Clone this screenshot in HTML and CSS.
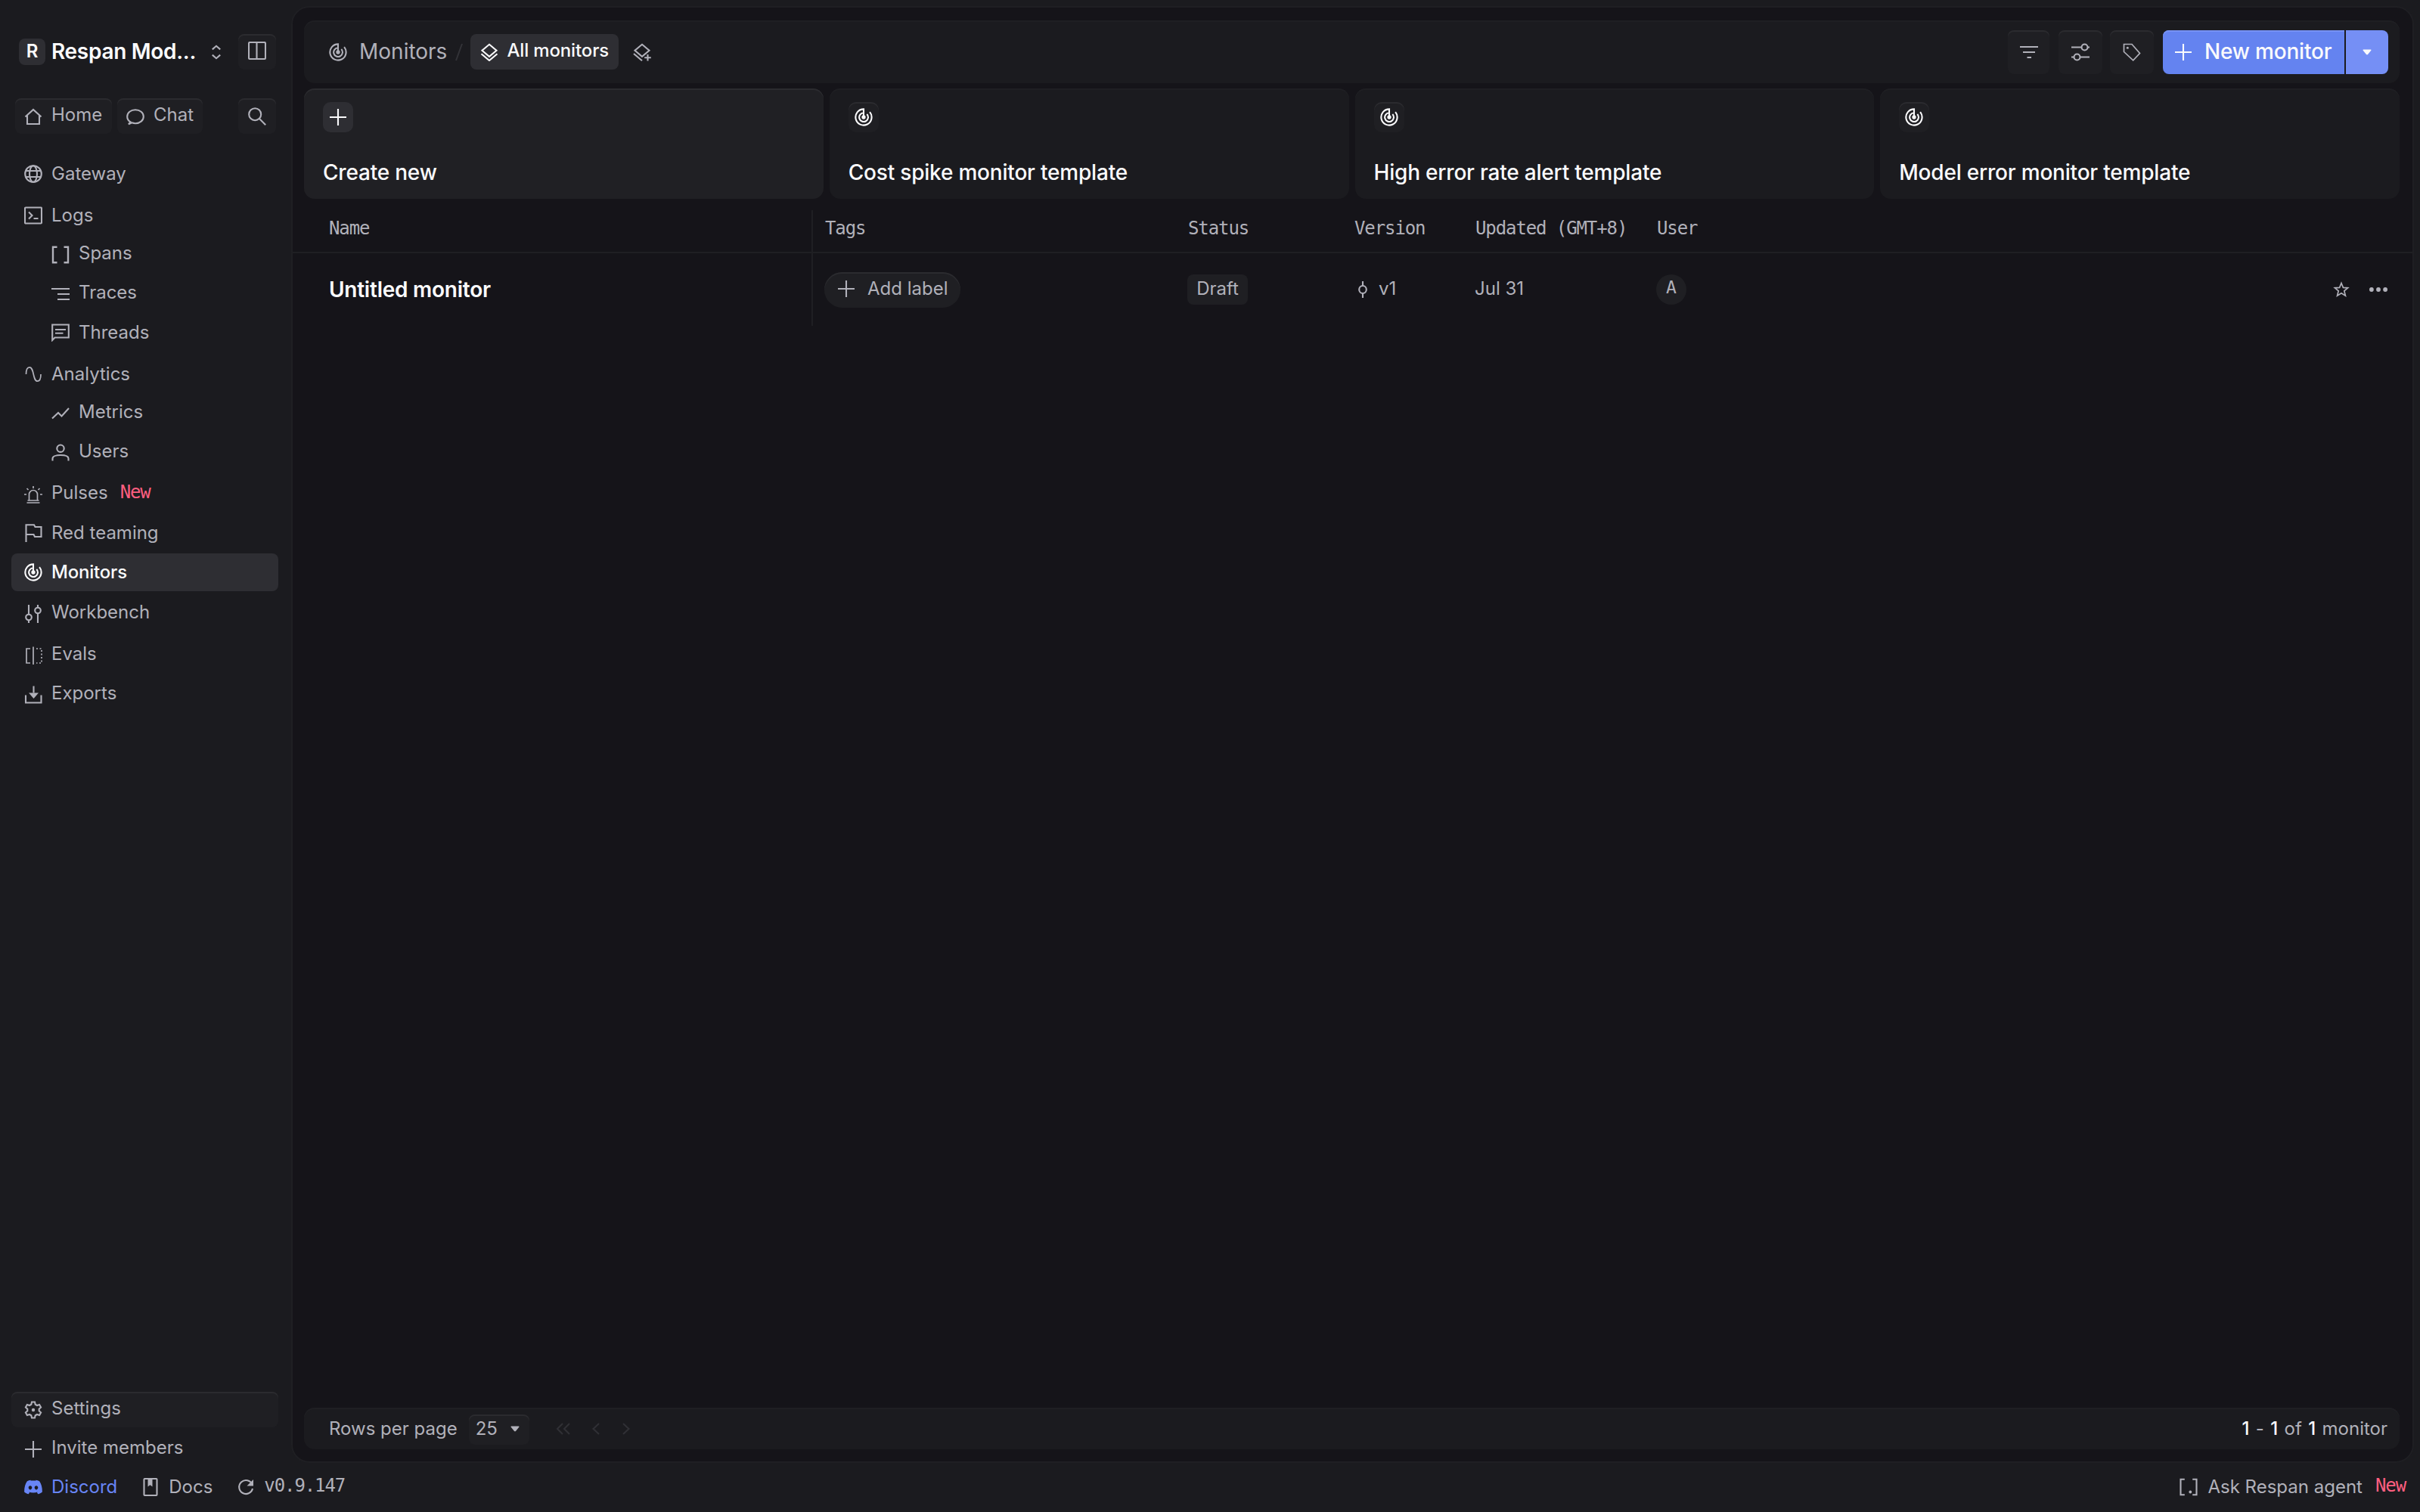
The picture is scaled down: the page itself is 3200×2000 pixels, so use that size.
FILE: index.html
```html
<!DOCTYPE html>
<html lang="en">
<head>
<meta charset="utf-8">
<title>Monitors</title>
<link rel="stylesheet" href="styles.css">
</head>
<body>
<svg class="sprite" aria-hidden="true">
  <symbol id="i-radar" viewBox="0 0 24 24"><path d="M12 12V1.4A10.6 10.6 0 1 0 20.1 5.2M12 6.2A5.9 5.9 0 1 0 16.3 8"/><circle cx="12" cy="12" r="1.6" class="solid"/></symbol>
  <symbol id="i-columns" viewBox="0 0 24 24"><rect x="1" y="1" width="22" height="22" rx="1.5"/><path d="M11.5 1v22"/></symbol>
  <symbol id="i-updown" viewBox="0 0 24 24"><path d="M6.8 8.4 12 3.8l5.200 4.600M6.800 15.600 12 20.200l5.200-4.600"/></symbol>
  <symbol id="i-home" viewBox="0 0 24 24"><path d="M1.500 12.500 12 3l10.500 9.500M4 11v11h16V11"/></symbol>
  <symbol id="i-chat" viewBox="0 0 24 24"><path d="M5.500 19.300C2.900 17.700 1.200 15.200 1.200 12.200 1.200 7 6 3.200 12 3.200s10.800 3.800 10.800 9-4.800 9-10.800 9c-1.700 0-3-.3-4.500-.9L3 22.400z"/></symbol>
  <symbol id="i-search" viewBox="0 0 24 24"><circle cx="9.200" cy="9.200" r="8"/><path d="m15 15 8.200 8.200"/></symbol>
  <symbol id="i-globe" viewBox="0 0 24 24"><circle cx="12" cy="12" r="10.800"/><ellipse cx="12" cy="12" rx="5" ry="10.800"/><path d="M2 8h20M2 16h20"/></symbol>
  <symbol id="i-terminal" viewBox="0 0 24 24"><rect x="1" y="1.500" width="22" height="21" rx="1"/><path d="m6 7.500 4.500 4.500L6 16.500M12.500 16h6"/></symbol>
  <symbol id="i-brackets" viewBox="0 0 24 24"><path d="M7.500 1.800H2v20.400h5.500M16.500 1.800H22v20.400h-5.500" stroke-width="2.400"/></symbol>
  <symbol id="i-bracketdot" viewBox="0 0 24 24"><path d="M6.800 1.800H1.500v20.400h5.300M17.200 1.800h5.300v20.400h-5.300"/><circle class="fill" cx="14.300" cy="18.500" r="1.900"/></symbol>
  <symbol id="i-traces" viewBox="0 0 24 24"><path d="M0 5h24M8 12h16M8 19h16"/></symbol>
  <symbol id="i-thread" viewBox="0 0 24 24"><path d="M1.200 22V1.500h21.600v17H4.500zM5 8h14M5 12.800h10.500"/></symbol>
  <symbol id="i-wave" viewBox="0 0 24 24"><path d="M2.500 12C2.500 6 4 2.800 7 2.800c6.500 0 4 18.400 10.500 18.400 3 0 4.500-3.200 4.500-9.200"/></symbol>
  <symbol id="i-trend" viewBox="0 0 24 24"><path d="m1 18.500 8-7.500 4.500 4.500L23 5"/></symbol>
  <symbol id="i-user" viewBox="0 0 24 24"><circle cx="12" cy="6.200" r="4.700"/><path d="M1.500 22.500v-3c0-3 5-4.500 10.500-4.500s10.500 1.500 10.500 4.500v3"/></symbol>
  <symbol id="i-siren" viewBox="0 0 24 24"><path d="M6.500 20v-8a5.500 5.500 0 0 1 11 0v8M4.500 20h15M3.500 23h17M12 1v3M3.500 4l2 2M20.500 4l-2 2M0 12h3M21 12h3"/></symbol>
  <symbol id="i-flag" viewBox="0 0 24 24"><path d="M2.500 24V1.200h10.500l1.500 2.800h8v13h-8.500l-1.500-3H2.500"/></symbol>
  <symbol id="i-tune" viewBox="0 0 24 24"><path d="M6 0v12.500M6 20.500V24M18 0v3.500M18 11.500V24"/><circle cx="6" cy="16.500" r="3.800"/><circle cx="18" cy="7.500" r="3.800"/></symbol>
  <symbol id="i-evals" viewBox="0 0 24 24"><path d="M8 3H3v19h5M12 .5v23.500"/><path d="M16 3h7v19h-7" stroke-dasharray="2 2.500"/></symbol>
  <symbol id="i-download" viewBox="0 0 24 24"><path d="M2 12.500V22.500h20.500V12.500M12.500.5v9"/><path class="fill" d="M6 9.500h13l-6.500 7.500z"/></symbol>
  <symbol id="i-gear" viewBox="0 0 24 24"><path d="M10 1.500h4l.7 3.200 2.300 1.300 3.100-1 2 3.500-2.400 2.200v2.600l2.400 2.200-2 3.500-3.100-1-2.300 1.300-.7 3.200h-4l-.7-3.200L7 18l-3.100 1-2-3.500 2.400-2.200v-2.600L1.900 8.500l2-3.500L7 6l2.300-1.300z"/><circle cx="12" cy="12" r="2.200" class="fill"/></symbol>
  <symbol id="i-plus" viewBox="0 0 24 24"><path d="M12 1v22M1 12h22"/></symbol>
  <symbol id="i-discord" viewBox="0 0 24 24"><path class="fill" fill-rule="evenodd" d="M8.800 2.800 8.300 3.600h7.400l-.5-.8c1.800.2 3.400.7 4.900 1.400C22.500 7.700 24 12 23.900 18.400c-1.700 1.400-3.600 2.300-5.700 2.900l-1.400-2.300 1.500-.8c-4 1.700-8.600 1.700-12.600 0l1.500.8-1.400 2.300c-2.100-.6-4-1.500-5.700-2.900C0 12 1.500 7.700 3.900 4.200c1.500-.7 3.100-1.200 4.900-1.400zM8 10.200c-1.300 0-2.300 1.200-2.300 2.600s1 2.600 2.300 2.600 2.300-1.200 2.300-2.600-1-2.600-2.300-2.600zm8 0c-1.300 0-2.300 1.200-2.300 2.600s1 2.600 2.300 2.600 2.300-1.200 2.300-2.600-1-2.600-2.300-2.600z"/></symbol>
  <symbol id="i-book" viewBox="0 0 24 24"><rect x="3.500" y="1" width="17" height="22" rx="1"/><path class="fill" d="M8.500 1h6v10.500l-3-2.200-3 2.200z"/></symbol>
  <symbol id="i-refresh" viewBox="0 0 24 24"><path d="M20.500 8.500A9 9 0 1 0 21 14"/><path class="fill" d="M22 2v8.500h-8.500z"/></symbol>
  <symbol id="i-layers" viewBox="0 0 24 24"><path d="m12 1.800 9.500 8-9.500 8-9.500-8zM1.500 14.300 12 23l10.500-8.700"/></symbol>
  <symbol id="i-layersplus" viewBox="0 0 24 24"><path d="m12 1.800 9.500 8-9.500 8-9.500-8zM1 14l11 9.200M19.500 15v8.500M15.200 19.300h8.600"/></symbol>
  <symbol id="i-filter" viewBox="0 0 24 24"><path d="M0 5h24M4 12h16M9.500 19h5.500"/></symbol>
  <symbol id="i-sliders" viewBox="0 0 24 24"><path d="M0 5.500h13M21.500 5.500H24M0 18.500h3M11.500 18.500H24"/><circle cx="17.500" cy="5.500" r="4"/><circle cx="7.500" cy="18.500" r="4"/></symbol>
  <symbol id="i-tag" viewBox="0 0 24 24"><path d="M1.500 1.500h10.500l10.500 12-8.800 9.300L1.500 11.500z"/><circle cx="6.300" cy="6.300" r="1.500" class="fill"/></symbol>
  <symbol id="i-caret" viewBox="0 0 24 24"><path class="fill" d="M7 8.500h10q.9.300.3 1.300L13 15q-1 .8-2 0L6.700 9.800Q6.100 8.800 7 8.500z"/></symbol>
  <symbol id="i-commit" viewBox="0 0 24 24"><ellipse cx="12" cy="12" rx="4.800" ry="5"/><path d="M12 1v6M12 17v6"/></symbol>
  <symbol id="i-star" viewBox="0 0 24 24"><path d="m12 3.500 2.400 5.900 6.200.4-4.800 4 1.600 6.300-5.400-3.400-5.400 3.400 1.600-6.300-4.800-4 6.200-.4z"/></symbol>
  <symbol id="i-dots" viewBox="0 0 24 24"><circle class="fill" cx="2.900" cy="12" r="2.900"/><circle class="fill" cx="12" cy="12" r="2.900"/><circle class="fill" cx="21.100" cy="12" r="2.900"/></symbol>
  <symbol id="i-first" viewBox="0 0 24 24"><path d="m11 5-7 7 7 7M20 5l-7 7 7 7"/></symbol>
  <symbol id="i-prev" viewBox="0 0 24 24"><path d="m16 5-7.500 7 7.500 7"/></symbol>
  <symbol id="i-next" viewBox="0 0 24 24"><path d="m8 5 7.500 7L8 19"/></symbol>
</svg>

<div class="app">
  <div class="body">
    <aside class="sidebar">
      <div class="workspace">
        <span class="badge">R</span>
        <span class="workspace-name">Respan Mod...</span>
        <svg class="icon updown"><use href="#i-updown"/></svg>
        <button class="btn square"><svg class="icon"><use href="#i-columns"/></svg></button>
      </div>
      <div class="quick">
        <button class="btn home"><svg class="icon low"><use href="#i-home"/></svg><span>Home</span></button>
        <button class="btn chat"><svg class="icon low"><use href="#i-chat"/></svg><span>Chat</span></button>
        <button class="btn square"><svg class="icon"><use href="#i-search"/></svg></button>
      </div>
      <nav class="nav">
        <a class="item"><svg class="icon"><use href="#i-globe"/></svg><span>Gateway</span></a>
        <a class="item group"><svg class="icon"><use href="#i-terminal"/></svg><span>Logs</span></a>
        <a class="item sub"><svg class="icon low"><use href="#i-brackets"/></svg><span>Spans</span></a>
        <a class="item sub next"><svg class="icon low"><use href="#i-traces"/></svg><span>Traces</span></a>
        <a class="item sub next last"><svg class="icon"><use href="#i-thread"/></svg><span>Threads</span></a>
        <a class="item group"><svg class="icon thin"><use href="#i-wave"/></svg><span>Analytics</span></a>
        <a class="item sub"><svg class="icon low"><use href="#i-trend"/></svg><span>Metrics</span></a>
        <a class="item sub next"><svg class="icon low"><use href="#i-user"/></svg><span>Users</span></a>
        <a class="item group"><svg class="icon thin low"><use href="#i-siren"/></svg><span>Pulses</span><em class="new">New</em></a>
        <a class="item next last"><svg class="icon"><use href="#i-flag"/></svg><span>Red teaming</span></a>
        <a class="item next active"><svg class="icon"><use href="#i-radar"/></svg><span>Monitors</span></a>
        <a class="item next last"><svg class="icon low"><use href="#i-tune"/></svg><span>Workbench</span></a>
        <a class="item group"><svg class="icon thin low"><use href="#i-evals"/></svg><span>Evals</span></a>
        <a class="item next"><svg class="icon low"><use href="#i-download"/></svg><span>Exports</span></a>
      </nav>
      <div class="side-end">
        <a class="item btn settings"><svg class="icon low"><use href="#i-gear"/></svg><span>Settings</span></a>
        <a class="item invite"><svg class="icon low"><use href="#i-plus"/></svg><span>Invite members</span></a>
      </div>
    </aside>

    <main class="panel">
      <header class="bar top">
        <svg class="icon"><use href="#i-radar"/></svg>
        <span class="crumb">Monitors</span>
        <svg class="slash" viewBox="0 0 10 24"><path d="M9 1 1 23"/></svg>
        <button class="view"><svg class="icon"><use href="#i-layers"/></svg><span>All monitors</span></button>
        <svg class="icon add-view"><use href="#i-layersplus"/></svg>
        <div class="tools">
          <button class="btn tool filter"><svg class="icon"><use href="#i-filter"/></svg></button>
          <button class="btn tool"><svg class="icon"><use href="#i-sliders"/></svg></button>
          <button class="btn tool"><svg class="icon thin"><use href="#i-tag"/></svg></button>
          <button class="primary"><svg class="icon"><use href="#i-plus"/></svg><span>New monitor</span></button>
          <button class="primary-more"><svg class="icon"><use href="#i-caret"/></svg></button>
        </div>
      </header>

      <section class="cards">
        <article class="card create"><span class="tile"><svg class="icon"><use href="#i-plus"/></svg></span><span>Create new</span></article>
        <article class="card"><span class="tile"><svg class="icon"><use href="#i-radar"/></svg></span><span>Cost spike monitor template</span></article>
        <article class="card"><span class="tile"><svg class="icon"><use href="#i-radar"/></svg></span><span>High error rate alert template</span></article>
        <article class="card"><span class="tile"><svg class="icon"><use href="#i-radar"/></svg></span><span>Model error monitor template</span></article>
      </section>

      <section class="table">
        <div class="row head">
          <span class="cell name">Name</span><span class="cell">Tags</span><span class="cell">Status</span><span class="cell">Version</span><span class="cell">Updated (GMT+8)</span><span class="cell">User</span>
        </div>
        <div class="row">
          <span class="cell name">Untitled monitor</span>
          <span class="cell"><button class="btn pill"><svg class="icon"><use href="#i-plus"/></svg><span>Add label</span></button></span>
          <span class="cell"><span class="status">Draft</span></span>
          <span class="cell"><svg class="icon commit"><use href="#i-commit"/></svg><span class="value">v1</span></span>
          <span class="cell"><span class="value">Jul 31</span></span>
          <span class="cell"><span class="avatar">A</span></span>
          <span class="cell actions"><svg class="icon thin"><use href="#i-star"/></svg><svg class="icon"><use href="#i-dots"/></svg></span>
        </div>
      </section>

      <footer class="bar pager">
        <span>Rows per page</span>
        <button class="btn select"><span>25</span><svg class="icon"><use href="#i-caret"/></svg></button>
        <svg class="icon step first"><use href="#i-first"/></svg>
        <svg class="icon step prev"><use href="#i-prev"/></svg>
        <svg class="icon step"><use href="#i-next"/></svg>
        <span class="count"><b>1</b> - <b>1</b> of <b>1</b> monitor</span>
      </footer>
    </main>
  </div>

  <footer class="status-bar">
    <a class="link discord"><svg class="icon"><use href="#i-discord"/></svg><span>Discord</span></a>
    <a class="link docs"><svg class="icon"><use href="#i-book"/></svg><span>Docs</span></a>
    <a class="link version"><svg class="icon"><use href="#i-refresh"/></svg><span class="mono">v0.9.147</span></a>
    <a class="link agent"><svg class="icon"><use href="#i-bracketdot"/></svg><span>Ask Respan agent</span><em class="new">New</em></a>
  </footer>
</div>
</body>
</html>
```
FILE: styles.css
```css
:root {
  --bg: #1b1b1f;
  --panel: #151419;
  --raised: #1f1f23;
  --edge: #2b2b2f;
  --line: #1f1f23;
  --strong: #2e2e33;
  --text: #b1b1ba;
  --bright: #fafafc;
  --blue: #6483f0;
  --pink: #ff5f80;
  --mono: "DejaVu Sans Mono", monospace;
}

* { box-sizing: border-box; }

body {
  margin: 0;
  background: var(--bg);
  color: var(--text);
  font: 400 24px/30px Inter, sans-serif;
}

button {
  font: inherit;
  letter-spacing: inherit;
  color: inherit;
  background: none;
  border: 0;
  padding: 0;
}

.sprite { display: block; width: 0; height: 0; }

.icon {
  flex: none;
  display: block;
  width: 24px;
  height: 24px;
  fill: none;
  stroke: currentColor;
  stroke-width: 2.1;
}
.icon.thin { stroke-width: 1.7; }
.icon.low { margin-top: 4px; }
.solid { fill: currentColor; }
.fill { fill: currentColor; stroke: none; }

.app { display: flex; flex-direction: column; width: 3200px; height: 2000px; }
.body { flex: 1; display: flex; min-height: 0; padding: 8px 8px 0 0; }

/* Sidebar */
.sidebar { width: 385px; display: flex; flex-direction: column; padding: 37px 17px 0 15px; margin-bottom: -9px; }

.btn {
  display: flex;
  align-items: center;
  background: var(--raised);
  box-shadow: inset 0 2px 0 var(--edge);
  border-radius: 8px;
}
.square { justify-content: center; width: 50px; height: 47px; padding-bottom: 3px; }

.workspace { display: flex; align-items: center; height: 47px; padding: 0 3px 0 10px; }
.badge {
  width: 35px; height: 35px; margin-right: 8px; border-radius: 8px;
  background: var(--strong); color: var(--bright);
  font-weight: 600; line-height: 33px; text-align: center;
}
.workspace-name { flex: 1; margin-top: -1px; color: var(--bright); font-size: 28px; font-weight: 600; letter-spacing: -0.3px; }
.updown { margin-right: 17px; }

.quick { display: flex; margin-top: 38px; padding: 0 3px 0 5px; }
.quick .btn { height: 47px; padding-bottom: 4px; }
.home { width: 128px; padding-left: 12px; gap: 12px; }
.chat { width: 113px; margin-left: 7px; padding-left: 12px; gap: 12px; }
.quick .square { margin-left: auto; padding-bottom: 0; }

.nav { margin-top: 28px; }
.item { display: flex; align-items: center; height: 50px; padding-left: 17px; gap: 12px; }
.item.sub { padding-left: 53px; }
.item.group { margin-top: 5px; }
.item.next { margin-top: 2px; }
.item.last { margin-top: 3px; }
.item.active { background: var(--strong); color: var(--bright); border-radius: 8px; font-weight: 500; letter-spacing: -0.2px; }
.new {
  font-family: var(--mono); font-style: normal; font-size: 24px; letter-spacing: -1.1px;
  color: var(--pink); margin: -3px 0 0 4px;
}

.side-end { margin-top: auto; }
.settings { height: 47px; padding-bottom: 4px; }
.invite { height: 56px; padding-bottom: 2px; }

/* Main panel */
.panel {
  flex: 1; display: flex; flex-direction: column;
  border: 2px solid var(--line); border-radius: 24px;
  background: var(--panel);
}
.bar {
  display: flex; align-items: center;
  margin: 0 17px 0 15px;
  background: var(--bg); border-radius: 14px;
  box-shadow: inset 0 2px 0 var(--line);
}
.top { height: 83px; margin-top: 17px; padding: 0 15px 0 33px; }
.crumb { margin: -2px 11px 0 16px; font-size: 28px; }
.slash { width: 10px; height: 24px; fill: none; stroke: #333338; stroke-width: 2; }
.view {
  display: flex; align-items: center; gap: 11px;
  width: 196px; height: 47px; margin-left: 10px; padding-left: 13px; border-radius: 8px;
  background: var(--strong); color: var(--bright); font-weight: 500; letter-spacing: -0.15px;
}
.view span { margin-top: -3px; }
.add-view { margin-left: 19px; }

.tools { display: flex; align-items: center; margin-left: auto; }
.tool { justify-content: center; width: 58px; height: 58px; margin-right: 10px; }
.filter { width: 55px; margin-right: 12px; }
.primary, .primary-more {
  display: flex; align-items: center; height: 58px;
  color: var(--bright);
}
.primary {
  width: 240px; margin: 0 2px; padding-left: 15px; gap: 16px;
  background: var(--blue); box-shadow: inset 0 2px 0 #7792f4;
  border-radius: 8px 0 0 8px; font-size: 28px; font-weight: 500; letter-spacing: -0.2px;
}
.primary span { margin-top: -2px; }
.primary-more { justify-content: center; width: 56px; background: #758ff5; border-radius: 0 8px 8px 0; }

.cards { display: grid; grid-template-columns: repeat(4, 1fr); gap: 8px; margin: 7px 17px 0 15px; }
.card {
  display: flex; flex-direction: column; justify-content: space-between; align-items: flex-start;
  height: 146px; padding: 18px 24px 20px 25px;
  background: var(--bg); border-radius: 14px;
  box-shadow: inset 0 2px 0 var(--line);
  color: var(--bright); font-size: 28px; font-weight: 500; letter-spacing: -0.2px;
}
.create { background: #202024; box-shadow: inset 0 2px 0 var(--edge); }
.tile {
  display: flex; align-items: center; justify-content: center;
  width: 40px; height: 40px; border-radius: 10px;
  background: var(--raised); box-shadow: inset 0 2px 0 var(--edge);
}
.create .tile { background: var(--strong); box-shadow: none; }

.row {
  display: grid; align-items: stretch;
  grid-template-columns: 703px 480px 220px 160px 240px 1fr auto;
  height: 96px;
}
.head {
  height: 72px; border-bottom: 2px solid var(--line);
  font-family: var(--mono); font-size: 24px; letter-spacing: -1.1px;
}
.cell { display: flex; align-items: center; }
.cell.name { padding-left: 48px; border-right: 2px solid var(--line); margin: 0 15px 0 0; }
.head .cell.name { margin-top: 15px; padding-bottom: 8px; }
.head .cell:not(.name) { padding: 7px 0 0 1px; }
.row:not(.head) .cell { padding-bottom: 1px; }
.row:not(.head) .name { color: var(--bright); font-size: 28px; font-weight: 600; letter-spacing: -0.25px; }
.pill { width: 180px; height: 47px; margin-top: 2px; border-radius: 24px; padding: 0 0 4px 17px; gap: 16px; }
.status { width: 80px; height: 40px; line-height: 37px; border-radius: 8px; background: var(--raised); text-align: center; }
.commit { margin-right: 9px; }
.value { margin-top: -2px; }
.avatar {
  width: 40px; height: 40px; line-height: 34px; border-radius: 50%;
  background: var(--raised); text-align: center; font-family: var(--mono); font-size: 23px;
}
.actions { gap: 25px; padding-right: 33px; }

.pager { height: 55px; margin-top: auto; margin-bottom: 16px; padding: 0 16px 0 33px; }
.select { width: 80px; height: 40px; margin: 2px 0 0 15px; padding: 0 0 2px 9px; gap: 11px; }
.step { color: #303035; }
.first { margin-left: 33px; margin-right: 19px; }
.prev { margin-right: 16px; }
.count { margin-left: auto; word-spacing: 1.6px; }
.count b { color: var(--bright); font-weight: 500; }

/* Bottom status bar */
.status-bar { display: flex; align-items: center; height: 65px; padding: 0 19px 2px 32px; }
.link { display: flex; align-items: center; gap: 12px; }
.discord { color: #6885f5; }
.docs { margin-left: 32px; }
.version { margin-left: 32px; gap: 12px; }
.mono { font-family: var(--mono); font-size: 24px; letter-spacing: -1.1px; margin-top: -3px; }
.agent { margin-left: auto; gap: 13px; }
```
